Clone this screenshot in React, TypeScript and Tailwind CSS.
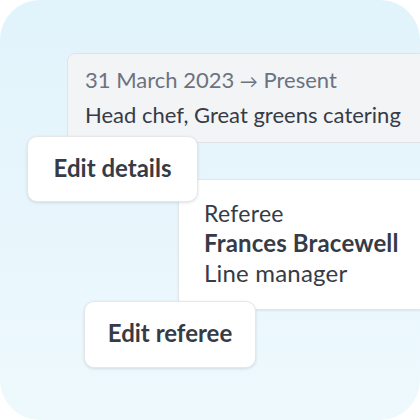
export default function App() {
  return (
    <div className="w-[420px] h-[420px] bg-white">
      <div
        className="w-[420px] h-[420px] rounded-[40px] overflow-hidden bg-gradient-to-b from-[#e1f3fb] to-[#eef9fd] pt-[53px] flex flex-col items-start"
        style={{ fontFamily: "Lato, 'Noto Sans', sans-serif" }}
      >
        {/* Employment card */}
        <div className="ml-[67px] w-[380px] h-[90px] shrink-0 rounded-tl-[8px] rounded-bl-[2px] bg-[#f3f4f6] border border-[#dfe3e7] pl-[17px] pt-[11px]">
          <div className="text-[22px] leading-[30px] text-[#6b7280] whitespace-nowrap">
            31 March 2023 <span className="text-[18px]">→</span> Present
          </div>
          <div className="text-[22px] leading-[30px] mt-[4px] text-[#363b46] whitespace-nowrap">
            Head chef, Great greens catering
          </div>
        </div>

        <button className="relative z-10 ml-[27px] -mt-[7px] w-[171px] h-[66px] shrink-0 rounded-[10px] bg-white border border-[#e5e7eb] shadow-[0_1px_3px_rgba(15,23,42,0.12)] text-[24px] font-bold text-[#363b46] pb-[3px]">
          Edit details
        </button>

        {/* Referee card */}
        <div className="-mt-[23px] ml-[178px] w-[260px] h-[131px] shrink-0 rounded-tl-[6px] bg-white border border-[#e3e6ea] shadow-[0_1px_2px_rgba(15,23,42,0.08)] pl-[25px] pt-[18px] flex flex-col">
          <div className="text-[23px] leading-[30px] text-[#363b46] tracking-[0.3px]">Referee</div>
          <div className="text-[24px] leading-[30px] font-bold text-[#363b46] tracking-[0.15px]">Frances Bracewell</div>
          <div className="text-[24px] leading-[30px] text-[#363b46] tracking-[0.2px]">Line manager</div>
        </div>

        <button className="relative z-10 ml-[84px] -mt-[9px] w-[172px] h-[67px] shrink-0 rounded-[10px] bg-white border border-[#e5e7eb] shadow-[0_1px_3px_rgba(15,23,42,0.12)] text-[24px] font-bold text-[#363b46] pb-[3px]">
          Edit referee
        </button>
      </div>
    </div>
  );
}
